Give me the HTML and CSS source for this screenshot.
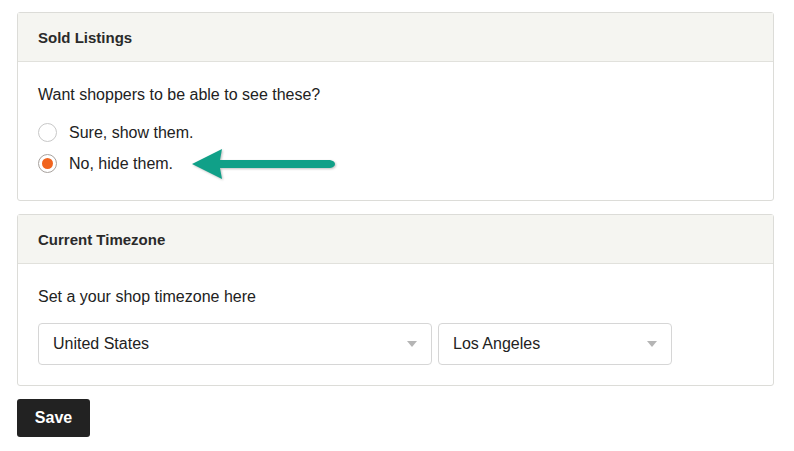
FILE: index.html
```html
<!DOCTYPE html>
<html lang="en">
<head>
    <meta charset="UTF-8">
    <title>Shop settings</title>
    <link rel="stylesheet" href="styles.css">
</head>
<body>
<div class="page">
    <section class="panel">
        <div class="panel-header">Sold Listings</div>
        <div class="panel-body">
            <p class="question">Want shoppers to be able to see these?</p>
            <label class="radio">
                <span class="radio-dot"></span>
                <span>Sure, show them.</span>
            </label>
            <label class="radio">
                <span class="radio-dot checked"></span>
                <span>No, hide them.</span>
                <svg class="arrow" width="146" height="34" viewBox="0 0 146 34">
                    <path d="M0 17 L30 2 L28 13 L138 13 Q143 14 143 17 Q143 20 138 21 L28 21 L30 32 Z" fill="#10a088"/>
                </svg>
            </label>
        </div>
    </section>

    <section class="panel">
        <div class="panel-header">Current Timezone</div>
        <div class="panel-body compact">
            <p class="question">Set a your shop timezone here</p>
            <div class="selects">
                <div class="select wide">
                    <span>United States</span>
                    <span class="caret"></span>
                </div>
                <div class="select narrow">
                    <span>Los Angeles</span>
                    <span class="caret"></span>
                </div>
            </div>
        </div>
    </section>

    <button class="save">Save</button>
</div>
</body>
</html>
```

FILE: styles.css
```css
* {
    box-sizing: border-box;
    margin: 0;
    padding: 0;
}

body {
    background-color: #fff;
    color: #222;
    font-family: 'Liberation Sans', Arial, sans-serif;
    font-size: 16px;
}

.page {
    padding: 12px 20px 0 17px;
    display: flex;
    flex-direction: column;
    gap: 13px;
}

.panel {
    border: 1px solid #dcdcd8;
    border-radius: 3px;
    background-color: #fff;
}

.panel-header {
    height: 49px;
    padding: 0 20px;
    display: flex;
    align-items: center;
    background-color: #f5f5f1;
    border-bottom: 1px solid #e1e1dc;
    font-size: 15px;
    font-weight: 700;
    color: #2a2a2a;
}

.panel-body {
    padding: 24px 20px 21px;
}

.panel-body.compact {
    padding-bottom: 20px;
}

.question {
    font-size: 16px;
    margin-bottom: 13px;
}

.radio {
    display: flex;
    align-items: center;
    gap: 12px;
    height: 31px;
}

.radio-dot {
    width: 19px;
    height: 19px;
    border: 1px solid #c8c8c8;
    border-radius: 50%;
    display: flex;
    align-items: center;
    justify-content: center;
    background-color: #fff;
}

.radio-dot.checked {
    border-color: #a8a29e;
}

.radio-dot.checked::after {
    content: "";
    width: 11px;
    height: 11px;
    border-radius: 50%;
    background-color: #f1641e;
}

.arrow {
    margin-left: 7px;
    filter: drop-shadow(1px 1px 1px rgba(0, 0, 0, 0.25));
}

.selects {
    display: flex;
    gap: 6px;
    margin-top: 17px;
}

.select {
    height: 42px;
    border: 1px solid #d6d6d6;
    border-radius: 4px;
    display: flex;
    align-items: center;
    justify-content: space-between;
    padding: 0 14px 0 14px;
}

.select.wide {
    width: 394px;
}

.select.narrow {
    width: 234px;
}

.caret {
    width: 0;
    height: 0;
    border-left: 5px solid transparent;
    border-right: 5px solid transparent;
    border-top: 6px solid #b5b5b5;
}

.save {
    align-self: flex-start;
    width: 73px;
    height: 38px;
    background-color: #222;
    color: #fff;
    border: none;
    border-radius: 3px;
    font-family: 'Liberation Sans', Arial, sans-serif;
    font-size: 16px;
    font-weight: 700;
}
```
